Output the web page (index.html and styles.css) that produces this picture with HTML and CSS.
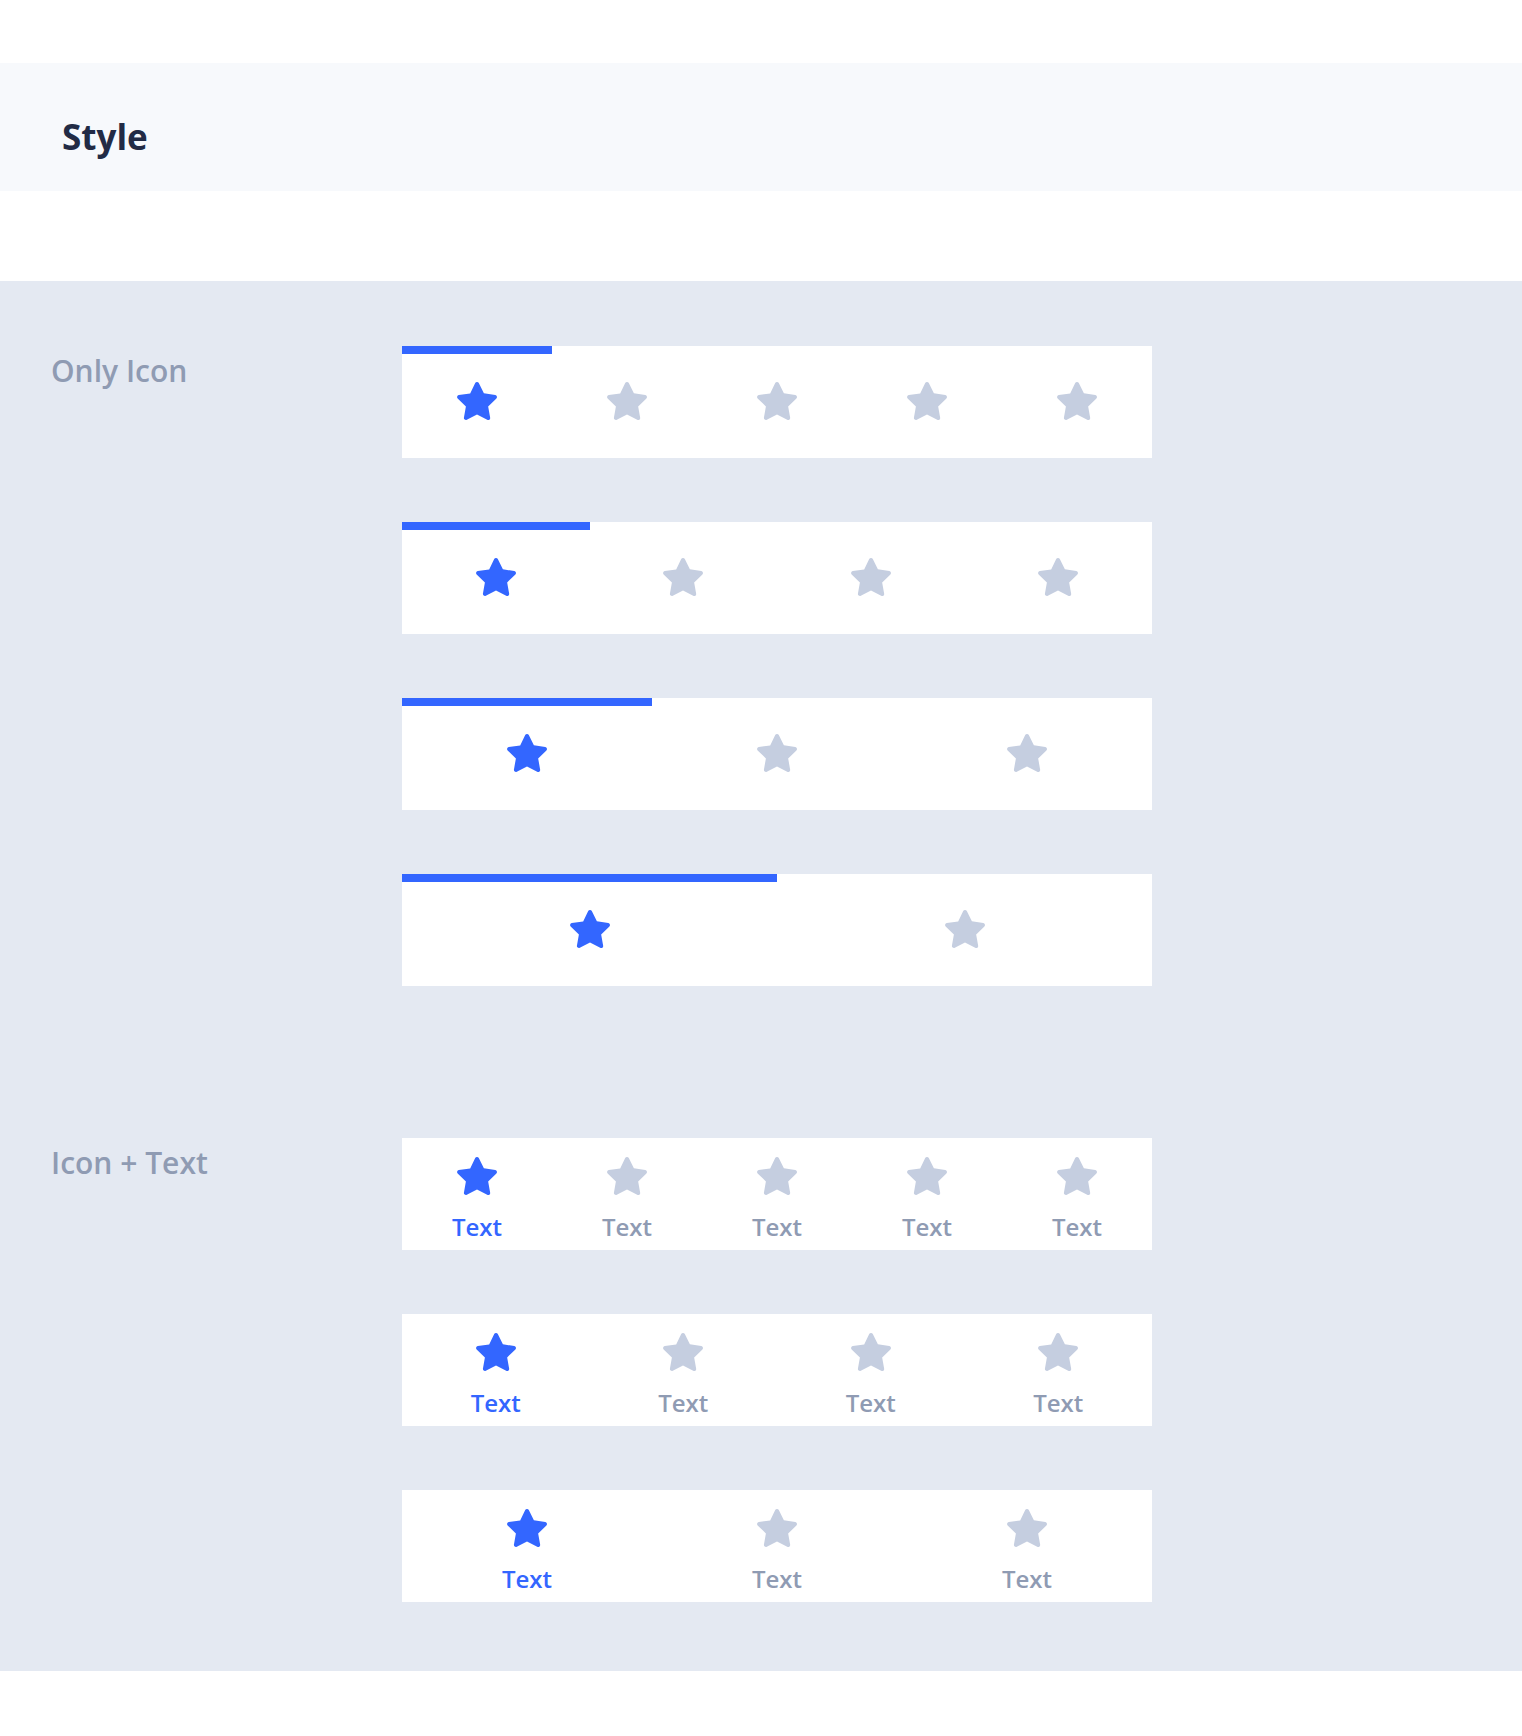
FILE: index.html
```html
<!DOCTYPE html>
<html lang="en">
<head>
<meta charset="utf-8">
<title>Style</title>
<link rel="stylesheet" href="styles.css">
</head>
<body>
<svg class="defs" width="0" height="0" aria-hidden="true">
  <defs>
    <symbol id="star" viewBox="0 0 24 24">
      <path d="M17.56 21a1 1 0 0 1-.46-.11L12 18.22l-5.1 2.67a1 1 0 0 1-1.45-1.06l1-5.630-4.12-4a1 1 0 0 1-.25-1 1 1 0 0 1 .81-.68l5.7-.83 2.51-5.13a1 1 0 0 1 1.8 0l2.54 5.12 5.7.83a1 1 0 0 1 .81.68 1 1 0 0 1-.25 1l-4.12 4 1 5.63a1 1 0 0 1-.4 1 1 1 0 0 1-.62.18z"/>
    </symbol>
  </defs>
</svg>

<header class="header">
  <h1 class="title">Style</h1>
</header>

<main class="showcase">
  <section class="group">
    <div class="label">Only Icon</div>
    <div class="cards">
      <div class="card">
        <span class="indicator w5"></span>
        <div class="item active"><svg class="star"><use href="#star"/></svg></div>
        <div class="item"><svg class="star"><use href="#star"/></svg></div>
        <div class="item"><svg class="star"><use href="#star"/></svg></div>
        <div class="item"><svg class="star"><use href="#star"/></svg></div>
        <div class="item"><svg class="star"><use href="#star"/></svg></div>
      </div>
      <div class="card">
        <span class="indicator w4"></span>
        <div class="item active"><svg class="star"><use href="#star"/></svg></div>
        <div class="item"><svg class="star"><use href="#star"/></svg></div>
        <div class="item"><svg class="star"><use href="#star"/></svg></div>
        <div class="item"><svg class="star"><use href="#star"/></svg></div>
      </div>
      <div class="card">
        <span class="indicator w3"></span>
        <div class="item active"><svg class="star"><use href="#star"/></svg></div>
        <div class="item"><svg class="star"><use href="#star"/></svg></div>
        <div class="item"><svg class="star"><use href="#star"/></svg></div>
      </div>
      <div class="card">
        <span class="indicator w2"></span>
        <div class="item active"><svg class="star"><use href="#star"/></svg></div>
        <div class="item"><svg class="star"><use href="#star"/></svg></div>
      </div>
    </div>
  </section>

  <section class="group group-text">
    <div class="label">Icon + Text</div>
    <div class="cards">
      <div class="card">
        <div class="item text-item active"><svg class="star"><use href="#star"/></svg><span class="caption">Text</span></div>
        <div class="item text-item"><svg class="star"><use href="#star"/></svg><span class="caption">Text</span></div>
        <div class="item text-item"><svg class="star"><use href="#star"/></svg><span class="caption">Text</span></div>
        <div class="item text-item"><svg class="star"><use href="#star"/></svg><span class="caption">Text</span></div>
        <div class="item text-item"><svg class="star"><use href="#star"/></svg><span class="caption">Text</span></div>
      </div>
      <div class="card">
        <div class="item text-item active"><svg class="star"><use href="#star"/></svg><span class="caption">Text</span></div>
        <div class="item text-item"><svg class="star"><use href="#star"/></svg><span class="caption">Text</span></div>
        <div class="item text-item"><svg class="star"><use href="#star"/></svg><span class="caption">Text</span></div>
        <div class="item text-item"><svg class="star"><use href="#star"/></svg><span class="caption">Text</span></div>
      </div>
      <div class="card">
        <div class="item text-item active"><svg class="star"><use href="#star"/></svg><span class="caption">Text</span></div>
        <div class="item text-item"><svg class="star"><use href="#star"/></svg><span class="caption">Text</span></div>
        <div class="item text-item"><svg class="star"><use href="#star"/></svg><span class="caption">Text</span></div>
      </div>
    </div>
  </section>
</main>
</body>
</html>
```

FILE: styles.css
```css
* {
  box-sizing: border-box;
}

html, body {
  margin: 0;
  padding: 0;
  background: #ffffff;
}

body {
  font-family: "Open Sans", "Noto Sans", "Liberation Sans", sans-serif;
  padding-top: 63px;
  padding-bottom: 65px;
}

.defs {
  position: absolute;
  width: 0;
  height: 0;
  overflow: hidden;
}

.header {
  height: 128px;
  background: #F7F9FC;
  padding: 50px 0 0 62px;
}

.title {
  margin: 0;
  font-size: 35px;
  line-height: 48px;
  font-weight: 700;
  color: #222B45;
}

.showcase {
  margin-top: 90px;
  background: #E4E9F2;
  padding: 65px 0 69px 51px;
  display: flex;
  flex-direction: column;
  gap: 152px;
}

.group {
  display: flex;
  align-items: flex-start;
}

.label {
  width: 351px;
  flex: none;
  font-size: 30px;
  line-height: 50px;
  font-weight: 600;
  color: #8F9BB3;
}

.cards {
  display: flex;
  flex-direction: column;
  gap: 64px;
}

.card {
  position: relative;
  width: 750px;
  height: 112px;
  background: #ffffff;
  display: flex;
}

.indicator {
  position: absolute;
  top: 0;
  left: 0;
  height: 8px;
  background: #3366FF;
}

.w5 { width: 20%; }
.w4 { width: 25%; }
.w3 { width: 33.333%; }
.w2 { width: 50%; }

.item {
  flex: 1 1 0;
  display: flex;
  align-items: center;
  justify-content: center;
  color: #C5CEE0;
}

.item.active {
  color: #3366FF;
}

.star {
  width: 48px;
  height: 48px;
  fill: currentColor;
  display: block;
}

.text-item {
  flex-direction: column;
  justify-content: flex-start;
  padding-top: 15px;
  gap: 10px;
}

.caption {
  font-size: 24px;
  line-height: 32px;
  font-weight: 600;
  color: #8F9BB3;
}

.text-item.active .caption {
  color: #3366FF;
}
```
